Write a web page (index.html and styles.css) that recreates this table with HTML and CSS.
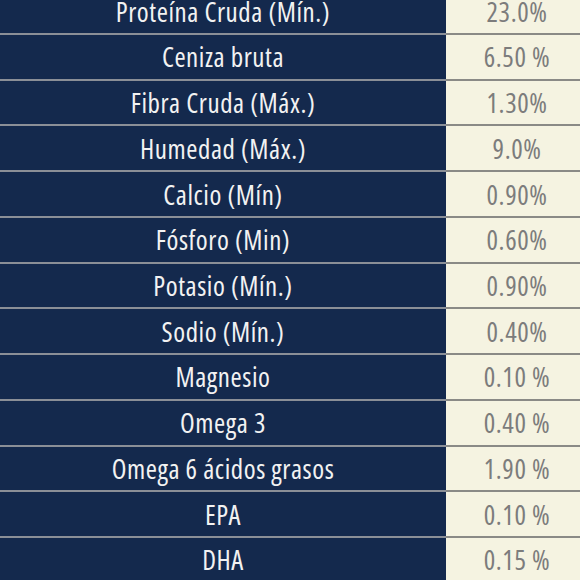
FILE: index.html
```html
<!DOCTYPE html>
<html lang="es">
<head>
<meta charset="utf-8">
<link rel="stylesheet" href="styles.css">
</head>
<body>
<div class="wrap">
  <table class="nutri">
    <tbody>
      <tr><td class="name">Proteína Cruda (Mín.)</td><td class="val">23.0%</td></tr>
      <tr><td class="name">Ceniza bruta</td><td class="val">6.50 %</td></tr>
      <tr><td class="name">Fibra Cruda (Máx.)</td><td class="val">1.30%</td></tr>
      <tr><td class="name">Humedad (Máx.)</td><td class="val">9.0%</td></tr>
      <tr><td class="name">Calcio (Mín)</td><td class="val">0.90%</td></tr>
      <tr><td class="name">Fósforo (Min)</td><td class="val">0.60%</td></tr>
      <tr><td class="name">Potasio (Mín.)</td><td class="val">0.90%</td></tr>
      <tr><td class="name">Sodio (Mín.)</td><td class="val">0.40%</td></tr>
      <tr><td class="name">Magnesio</td><td class="val">0.10 %</td></tr>
      <tr><td class="name">Omega 3</td><td class="val">0.40 %</td></tr>
      <tr><td class="name">Omega 6 ácidos grasos</td><td class="val">1.90 %</td></tr>
      <tr><td class="name">EPA</td><td class="val">0.10 %</td></tr>
      <tr><td class="name">DHA</td><td class="val">0.15 %</td></tr>
    </tbody>
  </table>
</div>
</body>
</html>
```
FILE: styles.css
```css
html, body {
  margin: 0;
  padding: 0;
  width: 580px;
  height: 580px;
  overflow: hidden;
  background: #14294d;
}
.wrap {
  width: 588px;
  margin-top: -10.7px;
}
.nutri {
  width: 588px;
  border-collapse: collapse;
  table-layout: fixed;
  font-family: "Open Sans", "DejaVu Sans", sans-serif;
  font-stretch: 75%;
  font-size: 27px;
  letter-spacing: 0.55px;
}
.nutri td {
  height: 43.73px;
  padding: 0;
  text-align: center;
  vertical-align: middle;
  border-bottom: 2px solid #8b8f97;
  line-height: 1;
}
.name {
  width: 446px;
  background: #14294d;
  color: #f2f2f2;
}
.val {
  width: 142px;
  background: #f5f3e1;
  color: #7c7c7c;
  border-bottom-color: #8a8a86 !important;
}
```
